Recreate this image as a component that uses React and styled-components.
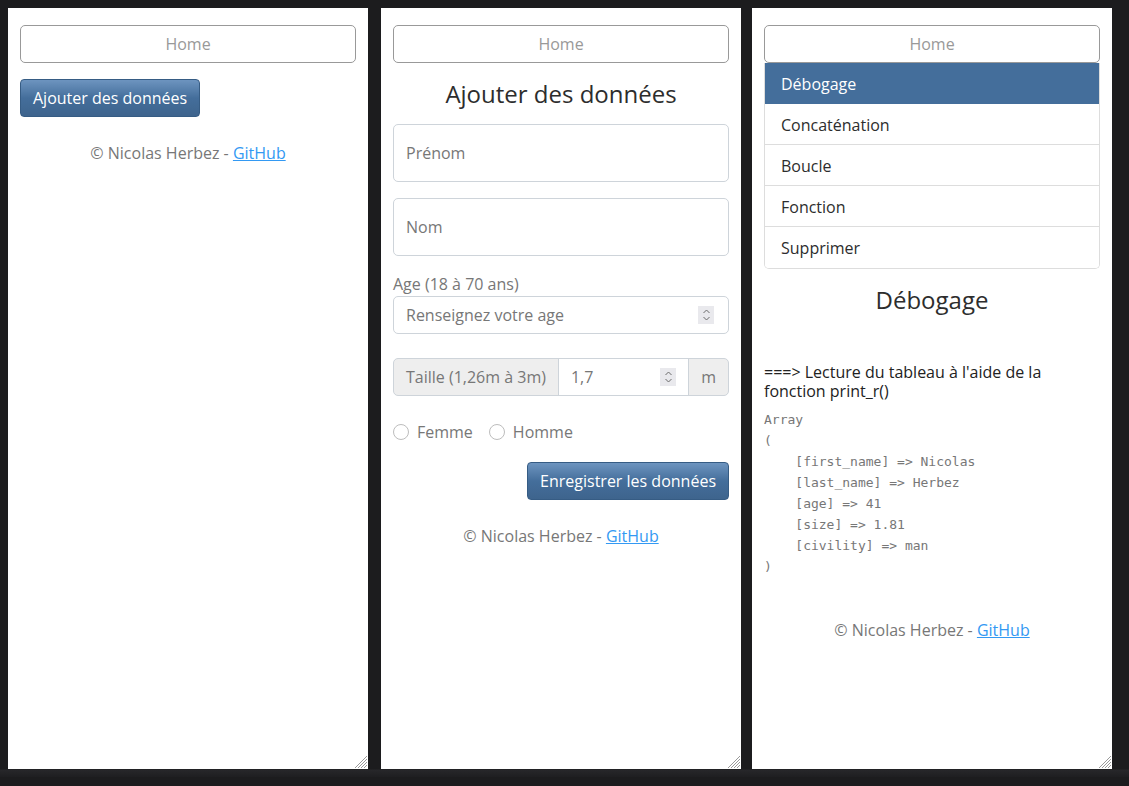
import React from "react";
import styled, { createGlobalStyle } from "styled-components";

const GlobalStyle = createGlobalStyle`
  html, body {
    background: linear-gradient(to bottom, #1c1c1e 769px, #27272a 770px, #1c1c1e 779px);
    background-color: #1c1c1e;
  }
  body {
    margin: 8px;
    font-family: "Open Sans", "Noto Sans", sans-serif;
    font-size: 16px;
    color: #777;
  }
  * { box-sizing: border-box; }
`;

const Spinner = () => (
  <SpinBox>
    <svg width="15" height="18" viewBox="0 0 15 18">
      <path d="M4.5 7 L7.5 4 L10.5 7" fill="none" stroke="#6b6b6b" strokeWidth="1" />
      <path d="M4.5 11 L7.5 14 L10.5 11" fill="none" stroke="#6b6b6b" strokeWidth="1" />
    </svg>
  </SpinBox>
);

const Grip = () => (
  <GripMark width="13" height="13" viewBox="0 0 13 13">
    <path d="M13 1 L1 13 M13 4 L4 13 M13 7 L7 13 M13 10 L10 13" stroke="#9a9a9a" strokeWidth="1" />
  </GripMark>
);

const Footer = ({ top }) => (
  <Credits $top={top}>
    © Nicolas Herbez - <CreditLink href="#">GitHub</CreditLink>
  </Credits>
);

const pre = `Array
(
    [first_name] => Nicolas
    [last_name] => Herbez
    [age] => 41
    [size] => 1.81
    [civility] => man
)`;

const menu = ["Débogage", "Concaténation", "Boucle", "Fonction", "Supprimer"];

const App = () => {
  return (
    <>
      <GlobalStyle />
      <Stage>
        <Panel $offset={0}>
          <HomeButton>Home</HomeButton>
          <PrimaryButton $top={16}>Ajouter des données</PrimaryButton>
          <Footer top={24} />
          <Grip />
        </Panel>

        <Panel $offset={13}>
          <HomeButton>Home</HomeButton>
          <Title $top={16}>Ajouter des données</Title>
          <Form>
            <TallInput type="text" placeholder="Prénom" $top={16} />
            <TallInput type="text" placeholder="Nom" $top={16} />
            <FieldLabel>Age (18 à 70 ans)</FieldLabel>
            <Field>
              <FieldInput type="text" placeholder="Renseignez votre age" />
              <Spinner />
            </Field>
            <InputGroup>
              <Addon>Taille (1,26m à 3m)</Addon>
              <GroupField>
                <FieldInput type="text" defaultValue="1,7" />
                <Spinner />
              </GroupField>
              <Addon>m</Addon>
            </InputGroup>
            <RadioRow>
              <RadioItem>
                <RadioCircle />
                Femme
              </RadioItem>
              <RadioItem>
                <RadioCircle />
                Homme
              </RadioItem>
            </RadioRow>
            <Actions>
              <PrimaryButton $top={0}>Enregistrer les données</PrimaryButton>
            </Actions>
          </Form>
          <Footer top={24} />
          <Grip />
        </Panel>

        <Panel $offset={11}>
          <HomeButton>Home</HomeButton>
          <ListGroup>
            {menu.map((item, i) => (
              <ListItem key={item} $active={i === 0}>
                {item}
              </ListItem>
            ))}
          </ListGroup>
          <Title $top={16}>Débogage</Title>
          <Caption>===&gt; Lecture du tableau à l'aide de la fonction print_r()</Caption>
          <Dump>{pre}</Dump>
          <Footer top={41} />
          <Grip />
        </Panel>
      </Stage>
    </>
  );
};

export default App;

const Stage = styled.div`
  display: flex;
  align-items: flex-start;
`;

const Panel = styled.div`
  position: relative;
  width: 360px;
  height: 761px;
  margin-left: ${(p) => p.$offset}px;
  padding: 17px 12px;
  background: #fff;
  overflow: hidden;
  flex: none;
`;

const GripMark = styled.svg`
  position: absolute;
  right: 1px;
  bottom: 1px;
`;

const HomeButton = styled.div`
  height: 38px;
  border: 1px solid #999;
  border-radius: 5px;
  color: #999;
  text-align: center;
  line-height: 36px;
  font-size: 16px;
`;

const PrimaryButton = styled.button`
  display: inline-block;
  margin-top: ${(p) => p.$top}px;
  height: 38px;
  padding: 0 12px;
  border: 1px solid #365c84;
  border-radius: 4px;
  background-image: linear-gradient(#6d94bf, #446e9b 50%, #3e648d);
  color: #fff;
  font-family: "Open Sans", "Noto Sans", sans-serif;
  font-size: 16px;
  line-height: 36px;
`;

const Credits = styled.div`
  margin-top: ${(p) => p.$top}px;
  text-align: center;
  line-height: 24px;
  color: #777;
`;

const CreditLink = styled.a`
  color: #3399f3;
  text-decoration: underline;
`;

const Title = styled.h2`
  margin: ${(p) => p.$top}px 0 0;
  font-size: 24px;
  font-weight: 400;
  line-height: 29px;
  text-align: center;
  color: #2d2d2d;
`;

const Form = styled.div`
  display: flex;
  flex-direction: column;
`;

const TallInput = styled.input`
  margin-top: ${(p) => p.$top}px;
  height: 58px;
  width: 100%;
  padding: 0 12px;
  border: 1px solid #ced4da;
  border-radius: 5px;
  font-family: "Open Sans", "Noto Sans", sans-serif;
  font-size: 16px;
  color: #777;
  outline: none;
  &::placeholder { color: #777; }
`;

const FieldLabel = styled.label`
  margin-top: 16px;
  line-height: 24px;
  color: #777;
`;

const Field = styled.div`
  display: flex;
  align-items: center;
  height: 38px;
  padding: 0 14px 0 12px;
  border: 1px solid #ced4da;
  border-radius: 5px;
`;

const FieldInput = styled.input`
  flex: 1;
  width: 0;
  min-width: 0;
  border: none;
  padding: 0;
  outline: none;
  background: transparent;
  font-family: "Open Sans", "Noto Sans", sans-serif;
  font-size: 16px;
  color: #777;
  &::placeholder { color: #777; }
`;

const SpinBox = styled.span`
  display: flex;
  width: 16px;
  height: 18px;
  background: #e9e9ed;
  align-items: center;
  justify-content: center;
  flex: none;
`;

const InputGroup = styled.div`
  display: flex;
  margin-top: 24px;
  height: 38px;
`;

const Addon = styled.span`
  flex: none;
  display: flex;
  align-items: center;
  padding: 0 12px;
  background: #eee;
  border: 1px solid #ced4da;
  color: #777;
  &:first-child { border-radius: 5px 0 0 5px; }
  &:last-child { border-radius: 0 5px 5px 0; }
`;

const GroupField = styled.div`
  flex: 1;
  min-width: 0;
  display: flex;
  align-items: center;
  padding: 0 12px;
  margin: 0 -1px;
  border: 1px solid #ced4da;
  position: relative;
  background: #fff;
`;

const RadioRow = styled.div`
  display: flex;
  gap: 16px;
  margin-top: 24px;
  line-height: 24px;
`;

const RadioItem = styled.label`
  display: flex;
  align-items: center;
  gap: 8px;
  color: #777;
`;

const RadioCircle = styled.span`
  width: 16px;
  height: 16px;
  border-radius: 50%;
  border: 1px solid #bdbdbd;
  background: #fff;
`;

const Actions = styled.div`
  display: flex;
  justify-content: flex-end;
  margin-top: 18px;
`;

const ListGroup = styled.div`
  border: 1px solid #ddd;
  border-top: none;
  border-radius: 0 0 5px 5px;
  overflow: hidden;
`;

const ListItem = styled.div`
  height: 41px;
  padding: 0 16px;
  line-height: 42px;
  overflow: hidden;
  margin: 0 -1px;
  color: ${(p) => (p.$active ? "#fff" : "#2d2d2d")};
  background: ${(p) => (p.$active ? "#446e9b" : "#fff")};
  border-left: 1px solid ${(p) => (p.$active ? "#446e9b" : "#ddd")};
  border-right: 1px solid ${(p) => (p.$active ? "#446e9b" : "#ddd")};
  border-bottom: 1px solid ${(p) => (p.$active ? "#446e9b" : "#ddd")};
  &:last-child { border-bottom: none; line-height: 42px; }
`;

const Caption = styled.p`
  margin: 49px 0 0;
  font-size: 16px;
  line-height: 19px;
  color: #222;
`;

const Dump = styled.pre`
  margin: 8px 0 0;
  font-family: "DejaVu Sans Mono", "Liberation Mono", monospace;
  font-size: 13px;
  line-height: 21px;
  color: #777;
`;
